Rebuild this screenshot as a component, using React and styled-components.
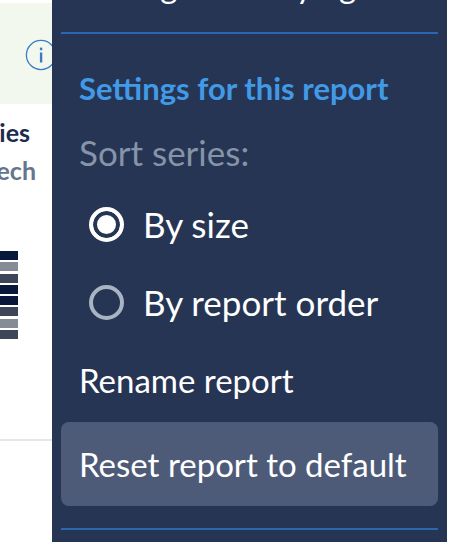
import React from 'react';
import styled, { createGlobalStyle } from 'styled-components';

const bars = ['#07183a', '#868c96', '#3d4759', '#07183a', '#07183a', '#3d4759', '#868c96', '#3d4759'];

function App() {
  return <Page>
    <GlobalStyle />
    <Report>
      <Notice>
        <InfoIcon viewBox="0 0 32 32">
          <circle cx="16" cy="16" r="14.6" fill="none" stroke="#3a7bc8" strokeWidth="1.3" />
          <rect x="14.9" y="13.5" width="2.4" height="10" fill="#3a7bc8" />
          <rect x="14.9" y="8.6" width="2.4" height="2.6" fill="#3a7bc8" />
        </InfoIcon>
      </Notice>
      <SeriesTitle>ies</SeriesTitle>
      <SeriesSub>ech</SeriesSub>
      <Bars>
        {bars.map((color, index) => (
          <Bar key={index} color={color} />
        ))}
      </Bars>
      <Rule />
    </Report>
    <Panel>
      <CutOff>Manage underlying</CutOff>
      <Divider />
      <Section>
        <Heading>Settings for this report</Heading>
        <SortLabel>Sort series:</SortLabel>
        <RadioRow>
          <Radio checked />
          By size
        </RadioRow>
        <RadioRow>
          <Radio />
          By report order
        </RadioRow>
        <Action>Rename report</Action>
        <Action active>Reset report to default</Action>
      </Section>
      <Divider />
    </Panel>
    <Gutter />
  </Page>;
}

export default App;


// **************Styling***************

const GlobalStyle = createGlobalStyle`
  html, body {
    margin: 0;
    padding: 0;
    background: #fff;
  }
`;

const Page = styled.div`
  display: flex;
  width: 464px;
  height: 542px;
  overflow: hidden;
  font-family: Lato, "Liberation Sans", sans-serif;
`;

const Report = styled.div`
  width: 52px;
  flex-shrink: 0;
  display: flex;
  flex-direction: column;
  align-items: flex-end;
`;

const Notice = styled.div`
  align-self: stretch;
  height: 101px;
  margin-top: 3px;
  background: #f2f8ee;
  display: flex;
  align-items: center;
`;

const InfoIcon = styled.svg`
  width: 32px;
  height: 32px;
  margin-left: 25px;
  margin-top: 2px;
  flex-shrink: 0;
`;

const SeriesTitle = styled.div`
  margin: 14px 22px 0 0;
  font-size: 25px;
  line-height: 28px;
  font-weight: 700;
  color: #1c2c4c;
`;

const SeriesSub = styled.div`
  margin: 10px 16px 0 0;
  font-size: 25px;
  line-height: 28px;
  font-weight: 700;
  color: #66758c;
`;

const Bars = styled.div`
  align-self: flex-start;
  margin-top: 67px;
  display: flex;
  flex-direction: column;
  gap: 2.25px;
`;

const Bar = styled.div`
  width: 18px;
  height: 9px;
  background: ${props => props.color};
`;

const Rule = styled.div`
  align-self: stretch;
  height: 2px;
  margin-top: 100px;
  background: #e4e7ec;
`;

const Panel = styled.div`
  width: 395px;
  flex-shrink: 0;
  height: 542px;
  background: #263554;
  padding: 0 9px;
  box-sizing: border-box;
  display: flex;
  flex-direction: column;
`;

const CutOff = styled.div`
  height: 41px;
  margin-top: -31px;
  padding: 0 18px;
  font-size: 33px;
  line-height: 32px;
  white-space: nowrap;
  color: #fff;
`;

const Divider = styled.div`
  height: 2px;
  flex-shrink: 0;
  margin-top: 22px;
  background: #2b66b0;
`;

const Section = styled.div`
  display: flex;
  flex-direction: column;
`;

const Heading = styled.div`
  margin-top: 36px;
  padding: 0 18px;
  font-size: 31px;
  line-height: 36px;
  font-weight: 700;
  color: #429ae6;
`;

const SortLabel = styled.div`
  margin-top: 27px;
  margin-bottom: 14px;
  padding: 0 18px;
  font-size: 35px;
  line-height: 38px;
  color: #8793a8;
`;

const RadioRow = styled.label`
  display: flex;
  align-items: center;
  gap: 19px;
  height: 78px;
  padding-left: 28px;
  font-size: 35px;
  color: #fff;
`;

const Radio = styled.span`
  width: 35px;
  height: 35px;
  flex-shrink: 0;
  border-radius: 50%;
  box-sizing: border-box;
  border: 4px solid ${props => props.checked ? '#fff' : '#a9b4c2'};
  background: ${props => props.checked ? '#fff' : 'transparent'};
  box-shadow: ${props => props.checked ? 'inset 0 0 0 4px #263554' : 'none'};
`;

const Action = styled.div`
  height: ${props => props.active ? '84px' : '81px'};
  box-sizing: border-box;
  padding: 0 18px ${props => props.active ? '0' : '3px'};
  display: flex;
  align-items: center;
  border-radius: 8px;
  font-size: 33px;
  color: #fff;
  background: ${props => props.active ? '#4e5b78' : 'transparent'};
`;

const Gutter = styled.div`
  flex: 1;
  background: #fff;
`;
